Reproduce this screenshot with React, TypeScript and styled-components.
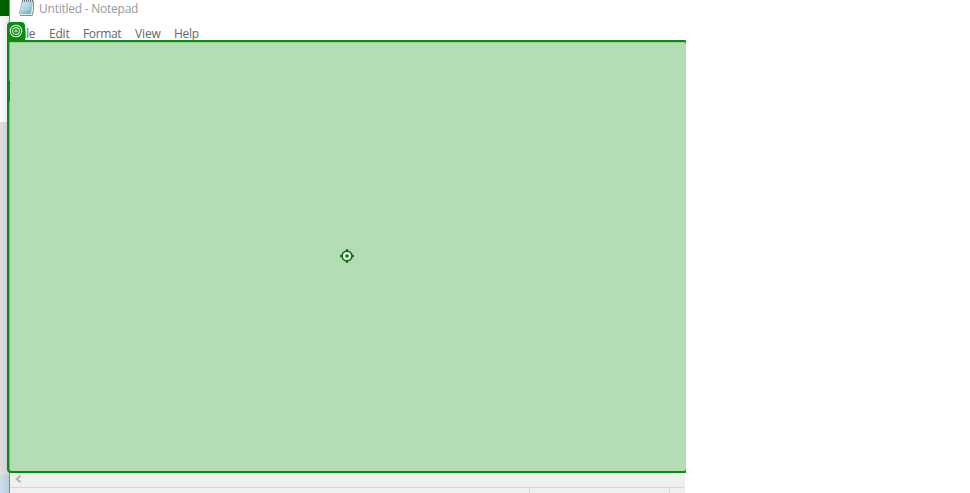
import React from "react";
import styled, { createGlobalStyle } from "styled-components";

const GlobalStyle = createGlobalStyle`
  html, body { margin: 0; padding: 0; background: #fff; overflow: hidden; }
  * { box-sizing: border-box; }
`;

const Desktop = styled.main`
  position: relative;
  display: flex;
  width: 970px;
  height: 493px;
  overflow: hidden;
  background: #fff;
  font-family: "Open Sans", "Noto Sans", sans-serif;
  font-size: 12px;
`;

const Backdrop = styled.div`
  position: relative;
  display: flex;
  flex-direction: column;
  width: 9px;
  &::after {
    content: "";
    position: absolute;
    inset: 0;
    background: linear-gradient(to right, transparent, rgba(0, 0, 0, 0.08));
  }
`;

const BackdropBand = styled.div<{ $height: number; $color: string }>`
  height: ${(p) => p.$height}px;
  background: ${(p) => p.$color};
`;

const Window = styled.section`
  display: flex;
  flex-direction: column;
  width: 676px;
  border-left: 1px solid #858b8f;
  background: #fff;
`;

const TitleBar = styled.header`
  display: flex;
  height: 24px;
  padding-left: 8px;
  color: #999;
`;

const Title = styled.span`
  margin-left: 4px;
  line-height: 18px;
  letter-spacing: -0.24px;
  white-space: pre;
`;

const MenuBar = styled.nav`
  display: flex;
  height: 18px;
  padding-left: 8px;
  gap: 14px;
  color: #666;
  line-height: 20px;
`;

const MenuItem = styled.span<{ $width: number; $spacing?: number }>`
  width: ${(p) => p.$width}px;
  letter-spacing: ${(p) => p.$spacing ?? 0}px;
  white-space: nowrap;
`;

const Editor = styled.div`
  height: 429px;
`;

const ScrollBar = styled.div`
  display: flex;
  align-items: flex-start;
  height: 16px;
  padding: 4px 0 0 5px;
  background: #f0f0f0;
`;

const StatusBar = styled.footer`
  display: flex;
  justify-content: flex-end;
  height: 6px;
  padding-top: 1px;
  border-top: 1px solid #d7d7d7;
  background: #f0f0f0;
`;

const StatusCell = styled.div<{ $width: number }>`
  width: ${(p) => p.$width}px;
  border-left: 1px solid #d7d7d7;
`;

const Highlight = styled.div`
  position: absolute;
  left: 7px;
  top: 40px;
  width: 681px;
  height: 433px;
  border: 2px solid #078d0e;
  border-radius: 0 4px 4px 4px;
  background: #b4ddb5;
  box-shadow: inset 1px 0 0 #7bb17c, inset 0 1px 0 #9dcf9e;
  clip-path: inset(0 2px 0 0);
`;

const FocusMark = styled.div`
  position: absolute;
  left: 0;
  top: 39px;
  width: 1px;
  height: 20px;
  background: #087669;
`;

const TargetBadge = styled.div`
  position: absolute;
  left: 7px;
  top: 22px;
  display: flex;
  justify-content: center;
  width: 18px;
  height: 19px;
  padding-top: 2px;
  border-radius: 4px 4px 0 0;
  background: #078d0e;
`;

const NotepadIcon = () => (
  <svg width="17" height="17" viewBox="0 0 17 17" fill="none">
    <defs>
      <linearGradient id="paper" x1="0" y1="0" x2="1" y2="1">
        <stop stopColor="#c7e7ee" />
        <stop offset=".55" stopColor="#a2d0df" />
        <stop offset="1" stopColor="#64a7bd" />
      </linearGradient>
    </defs>
    <path d="M4.5 1H16l-1.2 14.5H12z" fill="#f4f1ed" />
    <path d="M15.5 1v9l-1.3 5.5H2" stroke="#988979" />
    <path d="M4 1h10.5l-1.8 13H1z" fill="url(#paper)" stroke="#9eafb4" strokeWidth=".6" />
    <path d="M4 4h9M3.5 6.5h9M3 9h9" stroke="#d3edf2" strokeWidth=".5" />
    <path d="M4 .8h11" stroke="#596466" strokeWidth="1.6" strokeDasharray="1 1" />
  </svg>
);

const TargetIcon = () => (
  <svg width="14" height="14" viewBox="0 0 14 14" fill="none" stroke="#e7f5e7">
    <circle cx="7" cy="7" r="5.8" strokeWidth="1.1" />
    <circle cx="7" cy="7" r="3.4" strokeWidth="1.1" />
    <circle cx="7" cy="7" r="1" strokeWidth="1" />
  </svg>
);

const Crosshair = styled.svg`
  position: absolute;
  left: 331px;
  top: 207px;
`;

export default function App() {
  return (
    <>
      <GlobalStyle />
      <Desktop>
        <Backdrop>
          <BackdropBand $height={16} $color="#006400" />
          <BackdropBand $height={106} $color="#fdfdfd" />
          <BackdropBand $height={353} $color="#e0e0e0" />
          <BackdropBand $height={18} $color="#c9dfeb" />
        </Backdrop>
        <Window>
          <TitleBar>
            <NotepadIcon />
            <Title>Untitled - Notepad</Title>
          </TitleBar>
          <MenuBar>
            <MenuItem $width={17} $spacing={-0.5}>File</MenuItem>
            <MenuItem $width={20} $spacing={-0.2}>Edit</MenuItem>
            <MenuItem $width={38} $spacing={-0.35}>Format</MenuItem>
            <MenuItem $width={25} $spacing={-0.15}>View</MenuItem>
            <MenuItem $width={25} $spacing={-0.25}>Help</MenuItem>
          </MenuBar>
          <Editor />
          <ScrollBar>
            <svg width="7" height="8" viewBox="0 0 7 8" fill="none">
              <path d="M5.6.7 1.7 4l3.9 3.3" stroke="#b8b8b8" strokeWidth="2.1" />
            </svg>
          </ScrollBar>
          <StatusBar>
            <StatusCell $width={140} />
            <StatusCell $width={16} />
          </StatusBar>
        </Window>
        <Highlight>
          <FocusMark />
          <Crosshair width="14" height="14" viewBox="0 0 14 14" fill="none">
            <circle cx="7" cy="7" r="4.9" fill="#e3f4e3" stroke="#08700d" strokeWidth="1.7" />
            <path d="M7 0v2M7 12v2M0 7h2M12 7h2" stroke="#08700d" strokeWidth="1.8" />
            <circle cx="7" cy="7" r="1.7" fill="#08700d" />
          </Crosshair>
        </Highlight>
        <TargetBadge>
          <TargetIcon />
        </TargetBadge>
      </Desktop>
    </>
  );
}
